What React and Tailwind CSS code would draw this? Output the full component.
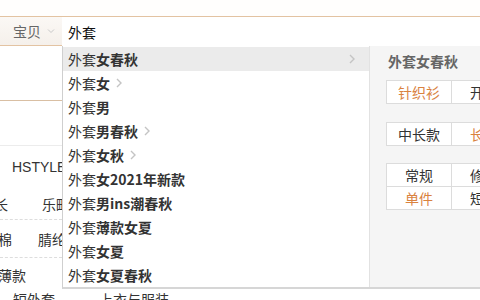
import React from "react";

const items = [
  { rest: "女春秋", arrow: "far", active: true },
  { rest: "女", arrow: "near" },
  { rest: "男" },
  { rest: "男春秋", arrow: "near" },
  { rest: "女秋", arrow: "near" },
  { rest: "女2021年新款" },
  { rest: "男ins潮春秋" },
  { rest: "薄款女夏" },
  { rest: "女夏" },
  { rest: "女夏春秋" },
];

function Chevron({ className = "" }) {
  return (
    <svg width="6" height="10" viewBox="0 0 6 10" className={className}>
      <path d="M1 1 L5 5 L1 9" fill="none" stroke="#c4c4c4" strokeWidth="1.4" />
    </svg>
  );
}

function Cell({ text, orange, top }) {
  return (
    <div
      className={`w-[66px] h-[24px] shrink-0 flex items-center justify-center border border-[#dcdcdc] bg-white text-[14px] leading-none -ml-px whitespace-nowrap ${
        top ? "" : "-mt-px"
      } ${orange ? "text-[#d9823f]" : "text-[#333]"}`}
    >
      {text}
    </div>
  );
}

export default function App() {
  return (
    <div
      className="relative w-[480px] h-[300px] overflow-hidden bg-white"
      style={{ fontFamily: '"Noto Sans CJK SC", "Noto Sans", sans-serif' }}
    >
      <div className="h-[16px] bg-[#fffefd]" />
      {/* search bar */}
      <div className="flex h-[30px] border-t border-[#e3c3a2]">
        <div className="w-[62px] flex items-center pl-[13px] gap-[6px] bg-gradient-to-b from-[#fbf8f5] to-[#f5f0eb] border-b border-[#e3c3a2]">
          <span className="text-[14px] text-[#666] leading-none">宝贝</span>
          <svg width="8" height="6" viewBox="0 0 8 6">
            <path d="M1 1.5 L4 4.5 L7 1.5" fill="none" stroke="#c8c8c8" strokeWidth="1" />
          </svg>
        </div>
        <div className="flex-1 flex items-center pl-[6px] bg-white">
          <span className="text-[14px] text-[#111] leading-none">外套</span>
        </div>
      </div>
      {/* page content behind */}
      <div className="w-[62px] overflow-hidden">
        <div className="h-[55px] border-b border-[#d9bfa3]" />
        <div className="h-[45px] border-b border-[#ececec]" />
        <div
          className="h-[42px] flex items-center pl-[12px] text-[14px] text-[#333] leading-none"
          style={{ fontFamily: '"Liberation Sans", sans-serif' }}
        >
          HSTYLE
        </div>
        <div className="h-[32px] flex items-center justify-between text-[14px] text-[#333] leading-none border-b border-dashed border-[#ddd] whitespace-nowrap">
          <span className="-ml-[6px]">长</span>
          <span className="-mr-[8px]">乐町</span>
        </div>
        <div className="h-[38px] flex items-center justify-between text-[14px] text-[#333] leading-none border-b border-dashed border-[#ddd] whitespace-nowrap">
          <span className="-ml-[2px]">棉</span>
          <span className="-mr-[4px]">腈纶</span>
        </div>
        <div className="h-[34px] flex items-center text-[14px] text-[#333] leading-none whitespace-nowrap">
          <span className="-ml-[2px]">薄款</span>
        </div>
      </div>
      <div className="absolute left-0 top-[292px] flex text-[14px] text-[#333] leading-none whitespace-nowrap">
        <span className="ml-[13px]">短外套</span>
        <span className="ml-[44px]">上衣与服装</span>
      </div>
      {/* dropdown */}
      <div className="absolute left-[62px] top-[46px] w-[420px] h-[243px] flex bg-white border-l border-[#cfcfcf] border-b-2 border-b-[#d6d6d6]">
        <div className="w-[306px] shrink-0 pt-px">
          {items.map((it, i) => (
            <div
              key={i}
              className={`h-[24px] flex items-center pl-[5px] pr-[10px] text-[14px] leading-none text-[#333] ${
                it.active ? "bg-[#ebebeb]" : ""
              }`}
            >
              <span>外套</span>
              <span className="font-bold">{it.rest}</span>
              {it.arrow === "near" && <Chevron className="ml-[6px]" />}
              {it.arrow === "far" && <Chevron className="ml-auto mr-[4px]" />}
            </div>
          ))}
        </div>
        <div className="flex-1 min-w-0 bg-[#f5f5f5] border-l border-[#e2e2e2] pl-[16px] pt-[6px]">
          <div className="pl-[2px] h-[18px] flex items-center text-[14px] font-bold text-[#666] leading-none whitespace-nowrap">
            外套女春秋
          </div>
          <div className="mt-[10px] flex pl-px">
            <Cell text="针织衫" orange top />
            <Cell text="开衫" top />
          </div>
          <div className="mt-[18px] flex pl-px">
            <Cell text="中长款" top />
            <Cell text="长款" orange top />
          </div>
          <div className="mt-[17px] pl-px">
            <div className="flex">
              <Cell text="常规" top />
              <Cell text="修身" top />
            </div>
            <div className="flex">
              <Cell text="单件" orange />
              <Cell text="短款" />
            </div>
          </div>
        </div>
      </div>
    </div>
  );
}
